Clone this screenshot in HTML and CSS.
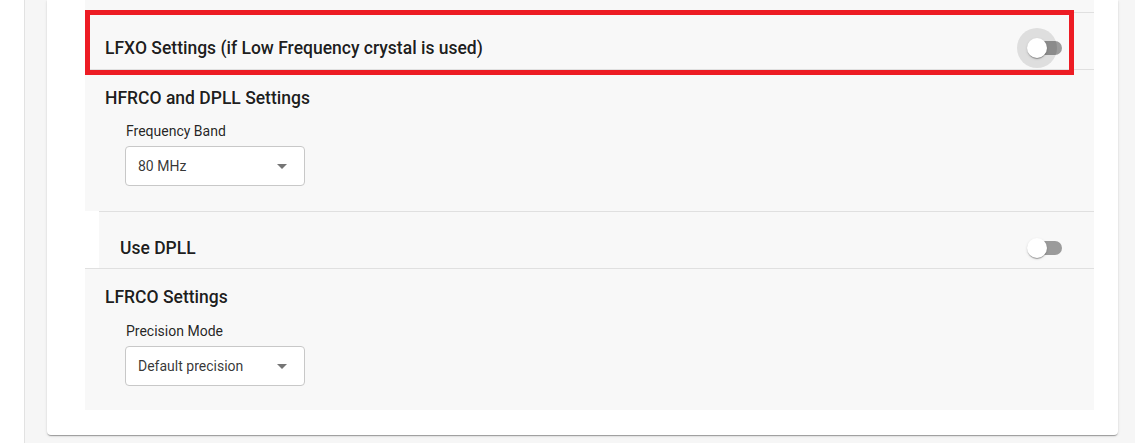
FILE: index.html
```html
<!DOCTYPE html>
<html lang="en">
<head>
<meta charset="utf-8">
<title>Clock Settings</title>
<link rel="stylesheet" href="styles.css">
</head>
<body>
<aside class="rail"></aside>
<main class="main">
  <div class="card">
    <div class="panel">
      <div class="prev"></div>
      <div class="row">
        <span class="row-title">LFXO Settings (if Low Frequency crystal is used)</span>
        <span class="switch focused">
          <span class="track"></span>
          <span class="halo"></span>
          <span class="thumb"></span>
        </span>
      </div>
      <section class="group">
        <h3 class="group-title">HFRCO and DPLL Settings</h3>
        <label class="field-label">Frequency Band</label>
        <div class="select"><span>80 MHz</span><span class="caret"></span></div>
      </section>
      <div class="sub">
        <div class="row sub-row">
          <span class="row-title">Use DPLL</span>
          <span class="switch">
            <span class="track"></span>
            <span class="thumb"></span>
          </span>
        </div>
      </div>
      <section class="group group-last">
        <h3 class="group-title">LFRCO Settings</h3>
        <label class="field-label">Precision Mode</label>
        <div class="select"><span>Default precision</span><span class="caret"></span></div>
      </section>
    </div>
    <div class="highlight"></div>
  </div>
</main>
</body>
</html>
```
FILE: styles.css
```css
* { box-sizing: border-box; }
html, body { margin: 0; padding: 0; }
body {
  display: flex;
  height: 443px;
  overflow: hidden;
  background: #f6f6f6;
  font-family: Roboto, "Liberation Sans", Arial, sans-serif;
  color: rgba(0,0,0,0.87);
}
.rail {
  width: 25px;
  flex: none;
  background: #fff;
  border-right: 1px solid #e2e2e2;
}
.main {
  flex: 1;
  padding: 0 17px 8px 22px;
  background: #f6f6f6;
}
.card {
  position: relative;
  background: #fff;
  border-radius: 0 0 4px 4px;
  padding: 0 24px 25px 38px;
  box-shadow: 0 2px 1px -1px rgba(0,0,0,0.2), 0 1px 1px 0 rgba(0,0,0,0.14), 0 1px 3px 0 rgba(0,0,0,0.12);
}
.panel { display: flex; flex-direction: column; }
.prev { height: 12px; background: #f8f8f8; }
.row {
  display: flex;
  align-items: center;
  justify-content: space-between;
  height: 58px;
  padding: 15px 20px 1px 20px;
  background: #f8f8f8;
  border-top: 1px solid #e0e0e0;
  border-bottom: 1px solid #e0e0e0;
}
.row-title {
  font-size: 17.5px;
  font-weight: 500;
  line-height: 24px;
  color: rgba(0,0,0,0.9);
}
.sub {
  background: #fff;
  padding-left: 14px;
  border-bottom: 1px solid #e0e0e0;
}
.sub-row {
  border-bottom: none;
  height: 57px;
  padding: 16px 20px 0 21px;
}
.group {
  background: #f8f8f8;
  padding: 16px 20px 25px 20px;
}
.group-last { padding-bottom: 24px; }
.group-last .field-label { margin-top: 12px; }
.group-title {
  margin: 0;
  font-size: 17.5px;
  font-weight: 500;
  line-height: 24px;
  color: rgba(0,0,0,0.9);
}
.field-label {
  display: block;
  margin: 11px 0 5px 21px;
  font-size: 14px;
  line-height: 20px;
  color: rgba(0,0,0,0.87);
}
.select {
  display: flex;
  align-items: center;
  justify-content: space-between;
  width: 180px;
  height: 40px;
  margin-left: 20px;
  padding: 0 17px 0 12px;
  background: #fff;
  border: 1px solid #c8c8c8;
  border-radius: 4px;
  font-size: 14px;
  color: rgba(0,0,0,0.8);
}
.caret {
  width: 0;
  height: 0;
  border-left: 5px solid transparent;
  border-right: 5px solid transparent;
  border-top: 5px solid #757575;
}
.switch {
  position: relative;
  width: 34px;
  height: 20px;
  margin-right: 12px;
  flex: none;
}
.track {
  position: absolute;
  left: 0;
  top: 3px;
  width: 34px;
  height: 14px;
  border-radius: 7px;
  background: #9b9b9b;
}
.halo {
  position: absolute;
  left: -11px;
  top: -10px;
  width: 40px;
  height: 40px;
  border-radius: 50%;
  background: rgba(0,0,0,0.1);
}
.thumb {
  position: absolute;
  left: -1px;
  top: 0;
  width: 20px;
  height: 20px;
  border-radius: 50%;
  background: #fff;
  box-shadow: 0 2px 1px -1px rgba(0,0,0,0.2), 0 1px 1px 0 rgba(0,0,0,0.14), 0 1px 3px 0 rgba(0,0,0,0.12);
}
.highlight {
  position: absolute;
  left: 38px;
  top: 10px;
  width: 989px;
  height: 65px;
  border: 5px solid #ed1c24;
  pointer-events: none;
}
```
